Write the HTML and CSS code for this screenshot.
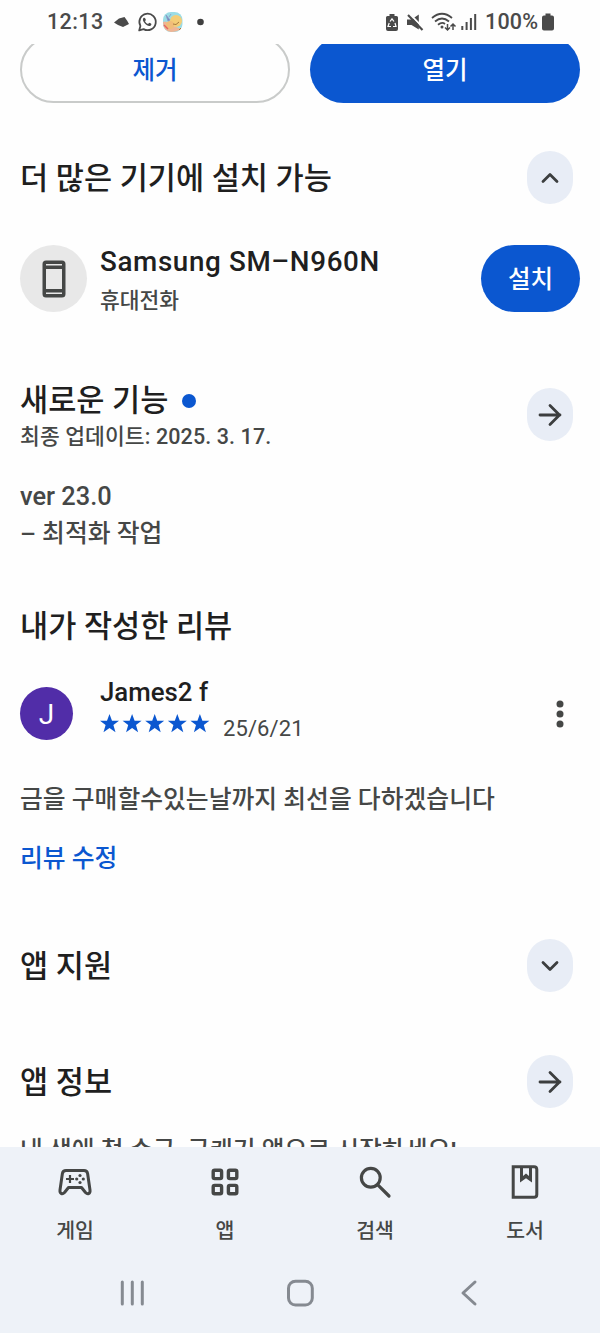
FILE: index.html
```html
<!DOCTYPE html>
<html lang="ko">
<head>
<meta charset="utf-8">
<title>앱 상세정보</title>
<link rel="stylesheet" href="styles.css">
</head>
<body>
<div class="screen">
  <header class="status">
    <span class="clock">12:13</span>
    <svg class="status-left" width="96" height="24" viewBox="112 10 96 24">
      <path d="M114 22.5L119 18.5L124.5 17L127 20.5L129 24L123 27L118 25Z" fill="#4a4a4a"/>
      <path d="M139.2 30.4L140.4 25.9A8.2 8.2 0 1 1 143.6 29.1Z" fill="none" stroke="#4a4a4a" stroke-width="1.8" stroke-linejoin="round"/>
      <path d="M143.8 17.8C142.2 19 142.8 21.2 144.9 23.6S149.6 26.9 151 25.2C152 24 151.2 23.6 149.3 22.8L148 24.1C146.6 23.5 145.6 22.4 145 21.2L145.9 20C145.2 18 144.8 17.3 143.8 17.8Z" fill="#4a4a4a"/>
      <rect x="163" y="12" width="19.5" height="20" rx="8" fill="#9bdce5"/>
      <path d="M163 22Q167 20 171 25L181 29Q177 32 171 32Q163 31 163 22Z" fill="#efb595"/>
      <circle cx="176" cy="21" r="6" fill="#f4cd76"/>
      <circle cx="170" cy="25" r="4" fill="#f1bd79"/>
      <path d="M166 15L170 20L168 21ZM169 17L171 14" fill="#7787bd" stroke="#8a97c4" stroke-width=".8"/>
      <path d="M164 25L168 29" stroke="#e46460" stroke-width="1.5"/>
      <path d="M173 24Q176 26 179 22M179 30L181 28" fill="none" stroke="#a5793e"/>
      <circle cx="200.5" cy="22" r="3.3" fill="#3f3f3f"/>
    </svg>
    <svg class="status-right" width="94" height="24" viewBox="384 10 94 24">
      <path d="M389.5 14H394.5V16H396.5Q398 16 398 17.5V29Q398 31 396 31H388Q386 31 386 29V17.5Q386 16 387.5 16H389.5Z" fill="#4a4a4a"/>
      <path d="M390 21.5L392 18.8L394 21.5M395 23L396 26.5H393M391 26.5H388L389.2 23" fill="none" stroke="#fff" stroke-width="1.2"/>
      <path d="M407 19.5H411.5L418.8 14.5V29.5L411.5 25H407Z" fill="#4a4a4a"/>
      <path d="M409.8 14L424 28.7" stroke="#fefefe" stroke-width="1.8"/>
      <path d="M408 15L422.5 30" stroke="#4a4a4a" stroke-width="2.1"/>
      <g fill="none" stroke="#4a4a4a" stroke-width="1.8">
        <path d="M432 18Q442 9.5 452 18M435 21.5Q442 15.5 449 21.5M438 24.7Q442 21.5 445 24"/>
        <path d="M447.5 24V29.5M445 27.5L447.5 30L450 27.5M453 30V24.5M450.5 26.5L453 24L455.5 26.5" stroke-width="1.5"/>
      </g>
      <circle cx="442" cy="27" r="1.5" fill="#4a4a4a"/>
      <path d="M462.3 26V30M466.6 22V30M470.9 18V30M475.2 14V30" stroke="#4a4a4a" stroke-width="2"/>
    </svg>
    <span class="percent">100%</span>
    <svg class="battery" width="12" height="18" viewBox="0 0 12 18"><path d="M3.5 0.5H8.5V2.5H10Q12 2.5 12 4.5V15.5Q12 17.5 10 17.5H2Q0 17.5 0 15.5V4.5Q0 2.5 2 2.5H3.5Z" fill="#4a4a4a"/></svg>
  </header>

  <main class="content">
    <div class="actions">
      <button class="pill pill-outline">제거</button>
      <button class="pill pill-fill">열기</button>
    </div>

    <section class="row devices-head">
      <h2>더 많은 기기에 설치 가능</h2>
      <span class="round"><svg width="24" height="24" viewBox="0 0 24 24"><path d="M5 15.5L12 8.5L19 15.5"/></svg></span>
    </section>

    <section class="device">
      <span class="device-icon">
        <svg width="24" height="38" viewBox="0 0 24 38"><path fill-rule="evenodd" d="M4 0.5H20Q23.5 0.5 23.5 4V34Q23.5 37.5 20 37.5H4Q0.5 37.5 0.5 34V4Q0.5 .5 4 .5ZM4 4H20V5.5H4ZM4 9V29H20V9ZM4 32.5H20V34H4Z" fill="#454746"/></svg>
      </span>
      <div class="device-text">
        <div class="device-name">Samsung SM–N960N</div>
        <div class="small device-type">휴대전화</div>
      </div>
      <button class="pill pill-fill install">설치</button>
    </section>

    <section class="row news-head">
      <div>
        <h2>새로운 기능<i class="new-dot"></i></h2>
        <div class="small updated">최종 업데이트: 2025. 3. 17.</div>
      </div>
      <span class="round"><svg width="24" height="24" viewBox="0 0 24 24"><path d="M2 12H22M12 2.5L21.5 12L12 21.5"/></svg></span>
    </section>
    <div class="body notes"><span class="version">ver 23.0</span><br>– 최적화 작업</div>

    <h2 class="my-review">내가 작성한 리뷰</h2>
    <section class="review">
      <span class="avatar">J</span>
      <div class="review-text">
        <div class="reviewer">James2 f</div>
        <div class="rating">
          <svg width="110" height="20" viewBox="0 0 110 20" fill="#0b57d0">
            <defs><path id="star" d="M9.5 0L12 6.7H19L13.4 11L15.5 18.2L9.5 14L3.5 18.2L5.6 11L0 6.7H7Z"/></defs>
            <use href="#star"/><use href="#star" x="22.6"/><use href="#star" x="45.2"/><use href="#star" x="67.8"/><use href="#star" x="90.4"/>
          </svg>
          <span class="date">25/6/21</span>
        </div>
      </div>
      <svg class="more" width="8" height="28" viewBox="0 0 8 28" fill="#454746"><circle cx="4" cy="4" r="3.5"/><circle cx="4" cy="14" r="3.5"/><circle cx="4" cy="24" r="3.5"/></svg>
    </section>
    <p class="body comment">금을 구매할수있는날까지 최선을 다하겠습니다</p>
    <a class="edit">리뷰 수정</a>

    <section class="row support">
      <h2>앱 지원</h2>
      <span class="round"><svg width="24" height="24" viewBox="0 0 24 24"><path d="M5 8.5L12 15.5L19 8.5"/></svg></span>
    </section>
    <section class="row info">
      <h2>앱 정보</h2>
      <span class="round"><svg width="24" height="24" viewBox="0 0 24 24"><path d="M2 12H22M12 2.5L21.5 12L12 21.5"/></svg></span>
    </section>
    <p class="body intro">내 생애 첫 수금, 금캐기 앱으로 시작하세요!</p>
  </main>

  <nav class="tabs">
    <a class="tab">
      <svg width="36" height="36" viewBox="0 0 36 36" fill="none" stroke="#454746" stroke-width="3" stroke-linejoin="round">
        <path d="M9 6.5H27Q30 6.5 30.6 9.5L33 26C33.5 30 30.5 30.5 28.5 28.5L24.5 23.5H11.5L7.5 28.5C5.5 30.5 2.5 30 3 26L5.4 9.5Q6 6.5 9 6.5Z"/>
        <path d="M9 15H17M13 11V19" stroke-width="2.2"/>
        <g fill="#454746" stroke="none"><circle cx="23" cy="11.5" r="1.6"/><circle cx="19.7" cy="15" r="1.6"/><circle cx="26.3" cy="15" r="1.6"/><circle cx="23" cy="18.5" r="1.6"/></g>
      </svg>
      <span>게임</span>
    </a>
    <a class="tab">
      <svg width="36" height="36" viewBox="0 0 36 36" fill="none" stroke="#454746" stroke-width="3.4"><rect x="6.2" y="6.2" width="8.4" height="8.4" rx="1.5"/><rect x="21.4" y="6.2" width="8.4" height="8.4" rx="1.5"/><rect x="6.2" y="21.4" width="8.4" height="8.4" rx="1.5"/><rect x="21.4" y="21.4" width="8.4" height="8.4" rx="1.5"/></svg>
      <span>앱</span>
    </a>
    <a class="tab">
      <svg width="36" height="36" viewBox="0 0 36 36" fill="none" stroke="#454746" stroke-width="3.2" stroke-linecap="round"><circle cx="13.8" cy="13.8" r="9.4"/><path d="M20.8 20.8L32 32"/></svg>
      <span>검색</span>
    </a>
    <a class="tab">
      <svg width="36" height="36" viewBox="0 0 36 36" fill="none" stroke="#454746" stroke-width="3"><path d="M6.2 2.8H27Q29.8 2.8 29.8 5.6V30.4Q29.8 33.2 27 33.2H6.2Z"/><path d="M13 3.5V18.5L19 14.2L25 18.5V3.5H22V12L19 9.5L16 12V3.5Z" fill="#454746" stroke="none"/></svg>
      <span>도서</span>
    </a>
  </nav>
  <footer class="system">
    <svg width="28" height="28" viewBox="0 0 28 28"><path d="M4.3 3V25M14.3 3V25M24.3 3V25"/></svg>
    <svg width="28" height="28" viewBox="0 0 28 28"><rect x="2.5" y="2.2" width="23.8" height="23.8" rx="7"/></svg>
    <svg width="28" height="28" viewBox="0 0 28 28"><path d="M21 3L9 14L21 25"/></svg>
  </footer>
</div>
</body>
</html>
```
FILE: styles.css
```css
* { box-sizing: border-box; }
body {
  margin: 0;
  background: #fefefe;
  color: #1f1f1f;
  font-family: Roboto, "Noto Sans CJK KR", sans-serif;
  font-weight: 500;
}
h2, p { margin: 0; font-weight: 500; }
svg { display: block; flex: none; }
.screen {
  width: 600px;
  height: 1333px;
  display: flex;
  flex-direction: column;
  overflow: hidden;
}
.status {
  height: 44px;
  flex: none;
  display: flex;
  align-items: center;
  padding: 0 46px 0 47px;
  font-size: 21.5px;
  line-height: 24px;
  color: #4a4a4a;
}
.clock { width: 65px; letter-spacing: .4px; }
.status-right { margin-left: auto; }
.percent { width: 54px; margin-left: 7px; white-space: nowrap; letter-spacing: .2px; }
.battery { margin-left: 3px; }

.content { height: 1103px; flex: none; overflow: hidden; padding: 0 20px; white-space: nowrap; }
.actions { display: grid; grid-template-columns: 270px 270px; gap: 20px; margin-top: -8px; }
.pill {
  height: 67px;
  padding: 2px 0 0;
  border: 0;
  border-radius: 34px;
  font: 500 24.5px/36px Roboto, "Noto Sans CJK KR", sans-serif;
}
.pill-outline { background: transparent; border: 2px solid #c9cbca; color: #0b57d0; }
.pill-fill { background: #0b57d0; color: #fff; }

h2 { font-size: 30.6px; line-height: 38px; padding-top: 2px; }
.row { display: flex; align-items: center; justify-content: space-between; height: 53px; padding-right: 7px; }
.round {
  width: 46px;
  height: 53px;
  border-radius: 23px;
  background: #e8edf6;
  display: flex;
  align-items: center;
  justify-content: center;
}
.round path { fill: none; stroke: #3c3e3f; stroke-width: 2.8; stroke-linecap: round; stroke-linejoin: round; }
.devices-head { margin-top: 48px; }

.device { display: flex; align-items: center; height: 67px; margin-top: 41px; }
.device-icon {
  width: 67px;
  height: 67px;
  border-radius: 50%;
  background: #e8e8e8;
  display: flex;
  align-items: center;
  justify-content: center;
}
.device-text { margin-left: 13px; flex: 1; padding-top: 5px; }
.device-name { font-size: 27.8px; line-height: 40px; letter-spacing: .63px; }
.small { font-size: 21.5px; line-height: 38px; color: #454746; }
.install { flex: none; width: 99px; }

.news-head { height: 72px; margin-top: 68px; align-items: flex-start; }
.news-head .round { margin-top: 8px; }
.new-dot { display: inline-block; width: 14px; height: 14px; margin-left: 14px; border-radius: 50%; background: #0b57d0; vertical-align: 3px; }
.updated { line-height: 34px; letter-spacing: .1px; }
.body { font-size: 24.8px; line-height: 37px; color: #454746; }
.notes { margin-top: 26px; }
.version { font-size: 25.4px; }
.my-review { margin-top: 54px; }
.review { display: flex; height: 64px; margin-top: 30px; }
.avatar {
  width: 53px;
  height: 53px;
  margin-top: 11px;
  border-radius: 50%;
  background: #512da8;
  color: #fff;
  font-size: 28px;
  font-weight: 400;
  line-height: 55px;
  text-align: center;
}
.review-text { flex: 1; margin-left: 27px; }
.reviewer { font-size: 25.8px; line-height: 32px; }
.rating { display: flex; gap: 13px; margin-top: 2px; }
.rating svg { margin-top: 4px; }
.date { font-size: 22px; line-height: 38px; font-weight: 400; letter-spacing: .1px; color: #454746; }
.more { margin: 24px 16px 0 0; }
.comment { margin-top: 41px; }
.edit { display: block; margin-top: 22px; font-size: 24.8px; line-height: 37px; color: #0b57d0; }
.support { margin-top: 62px; }
.info { margin-top: 63px; }
.intro { margin-top: 24px; }

.tabs { height: 111px; flex: none; display: flex; background: #eef2f8; color: #454746; }
.tab { flex: 1; display: flex; flex-direction: column; align-items: center; padding-top: 17px; font-size: 20.5px; line-height: 30px; }
.tab span { margin-top: 16px; }
.system { height: 75px; flex: none; display: grid; grid-template-columns: repeat(3, 28px); column-gap: 140px; justify-content: center; padding-top: 21px; background: #eef2f8; }
.system svg { fill: none; stroke: #858a91; stroke-width: 3; stroke-linecap: round; stroke-linejoin: round; }
```
